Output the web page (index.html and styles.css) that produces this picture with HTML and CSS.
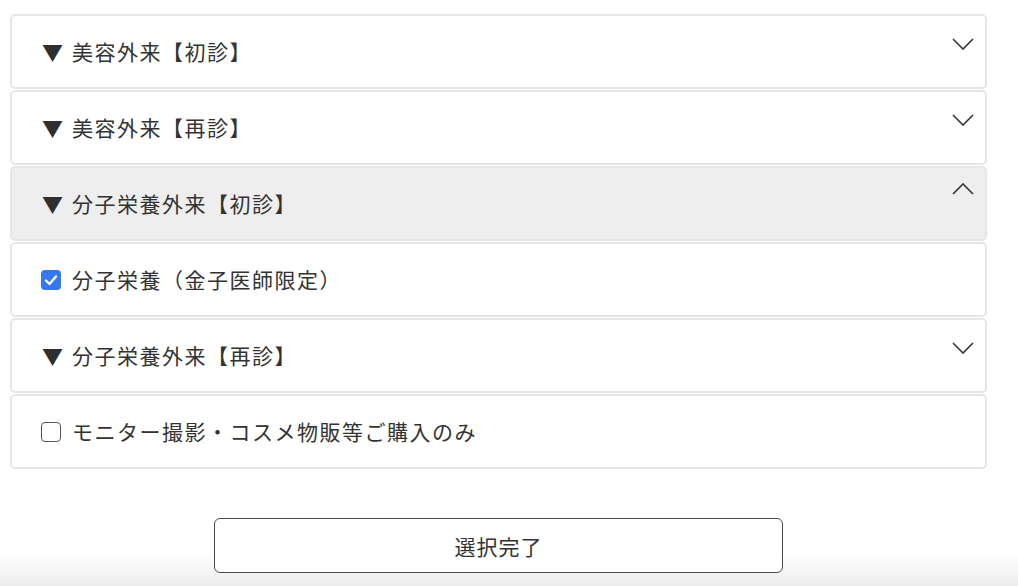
FILE: index.html
```html
<!DOCTYPE html>
<html lang="ja">
<head>
<meta charset="utf-8">
<title>メニュー選択</title>
<link rel="stylesheet" href="styles.css">
</head>
<body>
<div class="page">
  <div class="list">
    <div class="item head">
      <span class="tri">▼</span><span class="label">美容外来【初診】</span>
      <svg class="chev down" width="22" height="12" viewBox="0 0 22 12"><path d="M1 1 L11 11 L21 1" fill="none" stroke="#333" stroke-width="1.6"/></svg>
    </div>
    <div class="item head">
      <span class="tri">▼</span><span class="label">美容外来【再診】</span>
      <svg class="chev down" width="22" height="12" viewBox="0 0 22 12"><path d="M1 1 L11 11 L21 1" fill="none" stroke="#333" stroke-width="1.6"/></svg>
    </div>
    <div class="item head open">
      <span class="tri">▼</span><span class="label">分子栄養外来【初診】</span>
      <svg class="chev up" width="22" height="12" viewBox="0 0 22 12"><path d="M1 11 L11 1 L21 11" fill="none" stroke="#333" stroke-width="1.6"/></svg>
    </div>
    <label class="item option">
      <span class="box checked"><svg width="20" height="20" viewBox="0 0 20 20"><path d="M5 10.5 L8.5 14 L15 6.5" fill="none" stroke="#fff" stroke-width="2.4" stroke-linecap="round" stroke-linejoin="round"/></svg></span><span class="label">分子栄養（金子医師限定）</span>
    </label>
    <div class="item head">
      <span class="tri">▼</span><span class="label">分子栄養外来【再診】</span>
      <svg class="chev down" width="22" height="12" viewBox="0 0 22 12"><path d="M1 1 L11 11 L21 1" fill="none" stroke="#333" stroke-width="1.6"/></svg>
    </div>
    <label class="item option">
      <span class="box"></span><span class="label">モニター撮影・コスメ物販等ご購入のみ</span>
    </label>
  </div>
  <div class="actions">
    <button class="done" type="button">選択完了</button>
  </div>
</div>
</body>
</html>
```
FILE: styles.css
```css
* { box-sizing: border-box; }
html, body { margin: 0; padding: 0; }
body {
  font-family: "Noto Sans CJK JP", "Noto Sans", sans-serif;
  color: #333;
  background: #fff;
}
.page {
  height: 586px;
  padding: 14px 31px 0 10px;
  background: linear-gradient(to bottom, #fff 0, #fff 552px, #ededed 586px);
  overflow: hidden;
}
.list {
  display: flex;
  flex-direction: column;
  gap: 1px;
}
.item {
  display: flex;
  align-items: center;
  height: 75px;
  border: 2px solid #e6e6e6;
  border-radius: 5px;
  background: #fff;
  padding: 0 11px 0 30px;
}
.item.open { background: #eeeeee; }
.tri {
  font-size: 21px;
  width: 30px;
  flex: none;
  line-height: 1;
  color: #2f2f2f;
}
.label {
  font-size: 21px;
  letter-spacing: 1.5px;
  line-height: 1;
  color: #333;
  white-space: nowrap;
}
.chev {
  margin-left: auto;
  align-self: flex-start;
  flex: none;
}
.chev.down { margin-top: 22px; }
.chev.up { margin-top: 15px; }
.option { cursor: pointer; }
.box {
  width: 20px;
  height: 20px;
  flex: none;
  margin-left: -1px;
  margin-right: 11px;
  border: 1.5px solid #555;
  border-radius: 4px;
  background: #fff;
  display: flex;
}
.box.checked {
  border: none;
  background: #3479f0;
}
.actions {
  display: flex;
  justify-content: center;
  padding-top: 49px;
}
.done {
  width: 569px;
  height: 55px;
  border: 1.5px solid #4a4a4a;
  border-radius: 6px;
  background: #fff;
  font-family: "Noto Sans CJK JP", "Noto Sans", sans-serif;
  font-size: 21px;
  letter-spacing: 1px;
  color: #333;
}
```
